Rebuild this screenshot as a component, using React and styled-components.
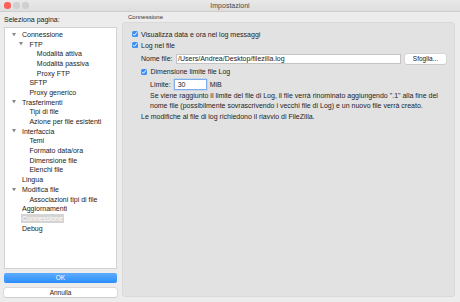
import React from "react";
import styled, { createGlobalStyle } from "styled-components";

const treeItems = [
  { label: "Connessione", level: 0, open: true },
  { label: "FTP", level: 1, open: true },
  { label: "Modalità attiva", level: 2 },
  { label: "Modalità passiva", level: 2 },
  { label: "Proxy FTP", level: 2 },
  { label: "SFTP", level: 1 },
  { label: "Proxy generico", level: 1 },
  { label: "Trasferimenti", level: 0, open: true },
  { label: "Tipi di file", level: 1 },
  { label: "Azione per file esistenti", level: 1 },
  { label: "Interfaccia", level: 0, open: true },
  { label: "Temi", level: 1 },
  { label: "Formato data/ora", level: 1 },
  { label: "Dimensione file", level: 1 },
  { label: "Elenchi file", level: 1 },
  { label: "Lingua", level: 0 },
  { label: "Modifica file", level: 0, open: true },
  { label: "Associazioni tipi di file", level: 1 },
  { label: "Aggiornamenti", level: 0 },
  { label: "Connessione", level: 0, selected: true },
  { label: "Debug", level: 0 },
];

function Check() {
  return (
    <CheckBox>
      <svg width="6" height="6" viewBox="0 0 6 6">
        <path
          d="M1.3 3.1 L2.5 4.3 L4.8 1.5"
          fill="none"
          stroke="#fff"
          strokeWidth="1"
          strokeLinecap="round"
          strokeLinejoin="round"
        />
      </svg>
    </CheckBox>
  );
}

function Arrow() {
  return (
    <svg width="4" height="3.5" viewBox="0 0 4 3.5">
      <path d="M0 0 L4 0 L2 3.5 Z" fill="#8a8a8a" />
    </svg>
  );
}

export default function App() {
  return (
    <Window>
      <GlobalStyle />
      <TitleBar>
        <Lights>
          <Light color="#fc5f57" />
          <Light color="#cfcfcf" />
          <Light color="#cfcfcf" />
        </Lights>
        <Title>Impostazioni</Title>
      </TitleBar>
      <Body>
        <Sidebar>
          <SideLabel>Seleziona pagina:</SideLabel>
          <Tree>
            {treeItems.map((item, i) => (
              <TreeRow key={i} level={item.level}>
                <Toggle>{item.open && <Arrow />}</Toggle>
                <TreeText selected={item.selected}>{item.label}</TreeText>
              </TreeRow>
            ))}
          </Tree>
          <OkButton>OK</OkButton>
          <CancelButton>Annulla</CancelButton>
        </Sidebar>
        <Main>
          <GroupLabel>Connessione</GroupLabel>
          <Group>
            <CheckRow>
              <Check />
              Visualizza data e ora nel log messaggi
            </CheckRow>
            <CheckRow>
              <Check />
              Log nel file
            </CheckRow>
            <FieldRow indent={9.5} top={2}>
              <FieldLabel>Nome file:</FieldLabel>
              <TextInput>/Users/Andrea/Desktop/filezilla.log</TextInput>
              <BrowseButton>Sfoglia...</BrowseButton>
            </FieldRow>
            <CheckRow indent={9.5} top={1.5}>
              <Check />
              Dimensione limite file Log
            </CheckRow>
            <FieldRow indent={18.5} top={1.5}>
              <FieldLabel>Limite:</FieldLabel>
              <LimitInput>30</LimitInput>
              <Unit>MiB</Unit>
            </FieldRow>
            <Note indent={18.5}>
              Se viene raggiunto il limite del file di Log, il file verrà rinominato aggiungendo ".1" alla fine del
              <br />
              nome file (possibilmente sovrascrivendo i vecchi file di Log) e un nuovo file verrà creato.
            </Note>
            <Note indent={9.5}>
              Le modifiche al file di log richiedono il riavvio di FileZilla.
            </Note>
          </Group>
        </Main>
      </Body>
    </Window>
  );
}

const GlobalStyle = createGlobalStyle`
  html, body {
    margin: 0;
    padding: 0;
    background: #ececec;
  }
  * {
    box-sizing: border-box;
  }
`;

const Window = styled.div`
  width: 460px;
  height: 302px;
  display: flex;
  flex-direction: column;
  background: #ececec;
  font-family: "Liberation Sans", Arial, sans-serif;
  font-size: 7px;
  color: #222;
  overflow: hidden;
`;

const TitleBar = styled.div`
  height: 11.5px;
  flex-shrink: 0;
  display: flex;
  align-items: center;
  justify-content: center;
  position: relative;
  background: linear-gradient(#e9e9e9, #dedede);
  border-bottom: 1px solid #cdcdcd;
`;

const Lights = styled.div`
  position: absolute;
  left: 4px;
  top: 2px;
  display: flex;
  gap: 2.5px;
`;

const Light = styled.span`
  width: 6.5px;
  height: 6.5px;
  border-radius: 50%;
  background: ${(p) => p.color};
`;

const Title = styled.div`
  font-size: 7px;
  color: #4a4a4a;
`;

const Body = styled.div`
  flex: 1;
  display: flex;
  gap: 5px;
  padding: 0 5px 5px 4px;
  min-height: 0;
`;

const Sidebar = styled.div`
  width: 113px;
  display: flex;
  flex-direction: column;
`;

const SideLabel = styled.div`
  margin-top: 4px;
  line-height: 8px;
  font-size: 7px;
  color: #222;
`;

const Tree = styled.div`
  flex: 1;
  margin-top: 3px;
  padding-top: 2px;
  background: #fff;
  border: 1px solid #d2d2d2;
`;

const TreeRow = styled.div`
  display: flex;
  align-items: center;
  height: 9.7px;
  padding-left: ${(p) => 7 + p.level * 7.4}px;
  white-space: nowrap;
`;

const Toggle = styled.span`
  width: 10px;
  flex-shrink: 0;
  display: flex;
  align-items: center;
`;

const TreeText = styled.span`
  margin-left: ${(p) => (p.selected ? "-1.5px" : "0")};
  padding: ${(p) => (p.selected ? "0 1.5px" : "0")};
  line-height: 9px;
  background: ${(p) => (p.selected ? "#d4d4d4" : "transparent")};
  color: ${(p) => (p.selected ? "#fff" : "#222")};
`;

const OkButton = styled.div`
  margin-top: 4px;
  height: 10px;
  display: flex;
  align-items: center;
  justify-content: center;
  border-radius: 2px;
  background: linear-gradient(#5eacfd, #2a8efc);
  color: #fff;
  font-size: 6.5px;
`;

const CancelButton = styled.div`
  margin-top: 5px;
  height: 9.5px;
  display: flex;
  align-items: center;
  justify-content: center;
  border-radius: 2px;
  background: #fff;
  box-shadow: 0 0 0 0.5px #c8c8c8, 0 0.5px 0.5px #b8b8b8;
  color: #222;
  font-size: 6.5px;
`;

const Main = styled.div`
  flex: 1;
  display: flex;
  flex-direction: column;
`;

const GroupLabel = styled.div`
  margin: 1px 0 1px 6px;
  line-height: 8px;
  font-size: 6px;
  color: #333;
`;

const Group = styled.div`
  flex: 1;
  padding: 6px 8px 0 8.5px;
  background: #e2e2e2;
  border: 1px solid #d9d9d9;
  border-radius: 3px;
`;

const CheckRow = styled.div`
  display: flex;
  align-items: center;
  gap: 3.5px;
  height: 11px;
  margin-top: ${(p) => p.top || 0}px;
  padding-left: ${(p) => p.indent || 0}px;
  white-space: nowrap;
`;

const CheckBox = styled.span`
  width: 6px;
  height: 6px;
  flex-shrink: 0;
  display: flex;
  border-radius: 1.5px;
  background: #3b8ff5;
`;

const FieldRow = styled.div`
  display: flex;
  align-items: center;
  height: ${(p) => (p.indent > 10 ? 11 : 12)}px;
  margin-top: ${(p) => p.top || 0}px;
  padding-left: ${(p) => p.indent || 0}px;
  white-space: nowrap;
`;

const FieldLabel = styled.span`
  margin-right: 3px;
`;

const TextInput = styled.div`
  flex: 1;
  height: 10px;
  display: flex;
  align-items: center;
  padding-left: 1.5px;
  background: #fff;
  border: 0.5px solid #c4c4c4;
  color: #222;
`;

const BrowseButton = styled.div`
  width: 41px;
  height: 10px;
  margin-left: 4.5px;
  display: flex;
  align-items: center;
  justify-content: center;
  border-radius: 2px;
  background: #fff;
  box-shadow: 0 0 0 0.5px #cacaca, 0 0.5px 0.5px #b5b5b5;
  font-size: 6.5px;
`;

const LimitInput = styled.div`
  width: 33px;
  height: 11px;
  display: flex;
  align-items: center;
  padding-left: 3px;
  background: #fff;
  border: 1px solid #7fadea;
  box-shadow: 0 0 0 0.5px #a9c8f2;
`;

const Unit = styled.span`
  margin-left: 3px;
`;

const Note = styled.div`
  margin-top: 1.5px;
  padding-left: ${(p) => p.indent}px;
  line-height: 9.7px;
  white-space: nowrap;
`;
